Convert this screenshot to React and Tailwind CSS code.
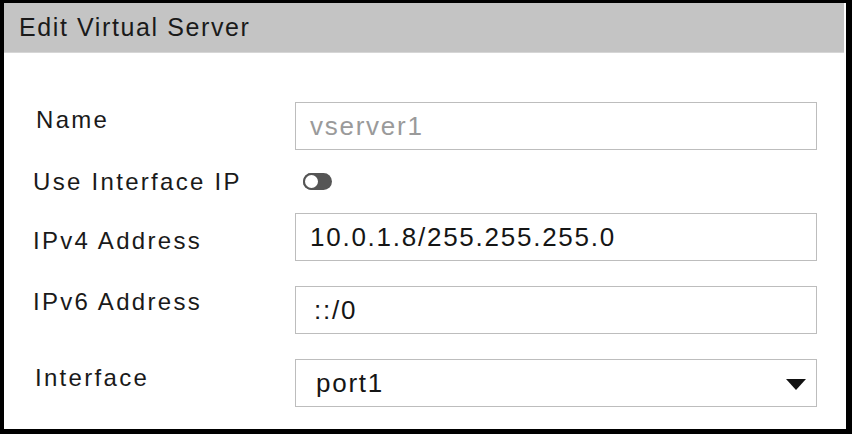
import React from "react";

function Label({ children, className = "" }) {
  return (
    <div className={"flex items-center h-full text-[24px] tracking-[2.3px] text-[#1a1a1a] leading-none whitespace-nowrap " + className}>
      {children}
    </div>
  );
}

function Field({ children, muted = false, select = false, className = "" }) {
  return (
    <div className="relative flex items-center h-[48px] border border-[#bdbdbd] bg-white pl-[14px]">
      <span className={"text-[26px] tracking-[1.75px] leading-none whitespace-nowrap " + (muted ? "text-[#9a9a9a] " : "text-[#151515] ") + className}>
        {children}
      </span>
      {select && (
        <svg className="absolute right-[10px] top-[19px]" width="20" height="11" viewBox="0 0 20 11">
          <path d="M0 0 H20 L10 11 Z" fill="#111" />
        </svg>
      )}
    </div>
  );
}

export default function App() {
  return (
    <div className="font-['Liberation_Sans',Arial,sans-serif] w-[852px] h-[434px] bg-white border-t-[3px] border-l-[4px] border-r-[6px] border-b-[5px] border-black flex flex-col overflow-hidden">
      <div className="h-[50px] mr-[2px] bg-[#c4c4c4] border-b border-[#d6d6d6] flex items-center pl-[15px] shrink-0">
        <span className="text-[25px] tracking-[1.6px] text-[#1a1a1a] leading-none">Edit Virtual Server</span>
      </div>
      <div className="pt-[49px] pl-[29px]">
        <div className="grid grid-cols-[262px_522px] grid-rows-[48px_13px_48px_48px_48px] gap-y-[25px]">
          <Label className="-mt-[6px] pl-[3px]">Name</Label>
          <Field muted>vserver1</Field>

          <Label>Use Interface IP</Label>
          <div className="flex items-center h-full pl-[8px]">
            <div className="relative w-[29px] h-[17px] rounded-full bg-[#555]">
              <div className="absolute left-0 top-0 w-[17px] h-[17px] rounded-full bg-white border-[2px] border-[#555]" />
            </div>
          </div>

          <Label className="mt-[4px]">IPv4 Address</Label>
          <Field>10.0.1.8/255.255.255.0</Field>

          <Label className="-mt-[8px]">IPv6 Address</Label>
          <Field className="pl-[4px]">::/0</Field>

          <Label className="-mt-[5px] pl-[2px]">Interface</Label>
          <Field select className="pl-[6px]">port1</Field>
        </div>
      </div>
    </div>
  );
}
